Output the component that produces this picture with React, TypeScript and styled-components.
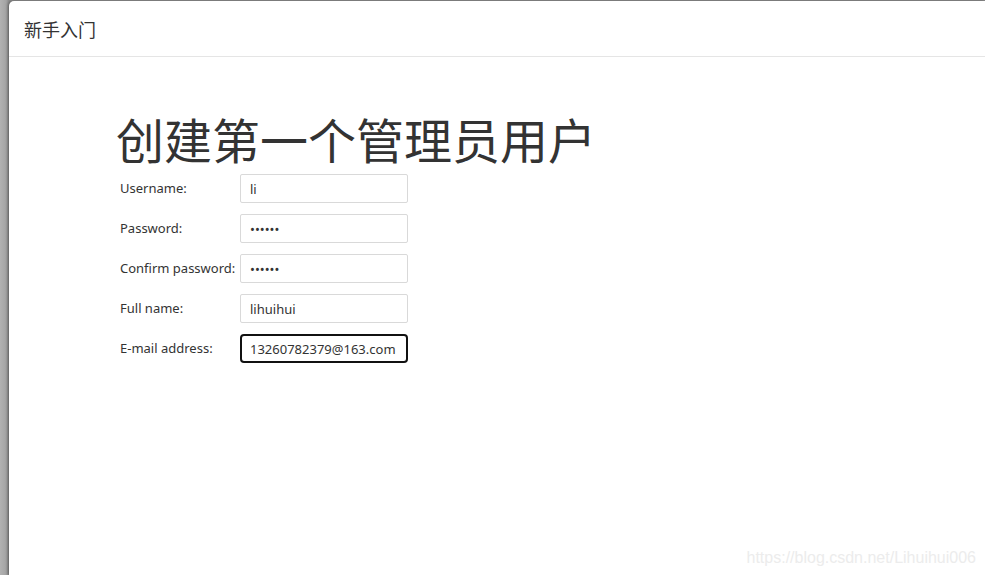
import React from 'react';
import styled, { createGlobalStyle } from 'styled-components';

const GlobalStyle = createGlobalStyle`
  html, body {
    margin: 0;
    padding: 0;
    height: 100%;
    overflow: hidden;
    background: #aaaaaa;
  }
  #root {
    height: 100%;
  }
`

const Backdrop = styled.div`
  box-sizing: border-box;
  height: 100vh;
  padding: 1px 0 0 9px;
  background: linear-gradient(to right, #b2b2b2 0px, #a4a4a4 6px, #8c8c8c 9px);
  font-family: "Noto Sans", "Noto Sans CJK SC", sans-serif;
`

const Modal = styled.div`
  position: relative;
  height: 100%;
  background: #fff;
  border-top-left-radius: 5px;
  box-shadow: -1px 0 3px rgba(0, 0, 0, 0.35);
  display: flex;
  flex-direction: column;
`

const Header = styled.div`
  box-sizing: border-box;
  height: 56px;
  padding: 0 15px;
  display: flex;
  align-items: center;
  border-bottom: 1px solid #e5e5e5;
  font-family: "Noto Sans CJK SC", sans-serif;
  font-size: 18px;
  color: #333;
`

const Body = styled.div`
  padding: 50px 0 0 109px;
`

const Title = styled.h1`
  margin: 0 0 4px -2px;
  font-family: "Noto Sans CJK SC", sans-serif;
  font-weight: 400;
  font-size: 48px;
  line-height: 63px;
  color: #333;
`

const Form = styled.div`
  display: flex;
  flex-direction: column;
  gap: 11px;
  padding-left: 2px;
`

const Row = styled.div`
  display: grid;
  grid-template-columns: 120px 168px;
  align-items: start;
`

const Label = styled.label`
  font-size: 13px;
  color: #333;
  line-height: 16px;
  padding-top: 6px;
  white-space: nowrap;
`

const Input = styled.input<{ $focused?: boolean }>`
  box-sizing: border-box;
  width: 168px;
  height: 29px;
  margin: 0;
  padding: 0 8px;
  font-family: "Noto Sans", sans-serif;
  font-size: 13px;
  color: #333;
  background: #fff;
  border: ${(p) => (p.$focused ? '2px solid #111' : '1px solid #d9d9d9')};
  border-radius: ${(p) => (p.$focused ? '4px' : '2px')};
  padding-left: ${(p) => (p.$focused ? '8px' : '9px')};
  outline: none;
`

const Watermark = styled.div`
  position: absolute;
  right: 9px;
  bottom: 8px;
  font-family: "Liberation Sans", Arial, sans-serif;
  font-size: 16px;
  color: #ececec;
`

const fields = [
  { label: 'Username:', type: 'text', value: 'li' },
  { label: 'Password:', type: 'password', value: '123456' },
  { label: 'Confirm password:', type: 'password', value: '123456' },
  { label: 'Full name:', type: 'text', value: 'lihuihui' },
  { label: 'E-mail address:', type: 'text', value: '13260782379@163.com', focused: true },
]

function App() {
  return (
    <>
      <GlobalStyle />
      <Backdrop>
        <Modal>
          <Header>新手入门</Header>
          <Body>
            <Title>创建第一个管理员用户</Title>
            <Form>
              {fields.map((f) => (
                <Row key={f.label}>
                  <Label>{f.label}</Label>
                  <Input type={f.type} defaultValue={f.value} $focused={f.focused} readOnly />
                </Row>
              ))}
            </Form>
          </Body>
          <Watermark>https://blog.csdn.net/Lihuihui006</Watermark>
        </Modal>
      </Backdrop>
    </>
  );
}

export default App;
